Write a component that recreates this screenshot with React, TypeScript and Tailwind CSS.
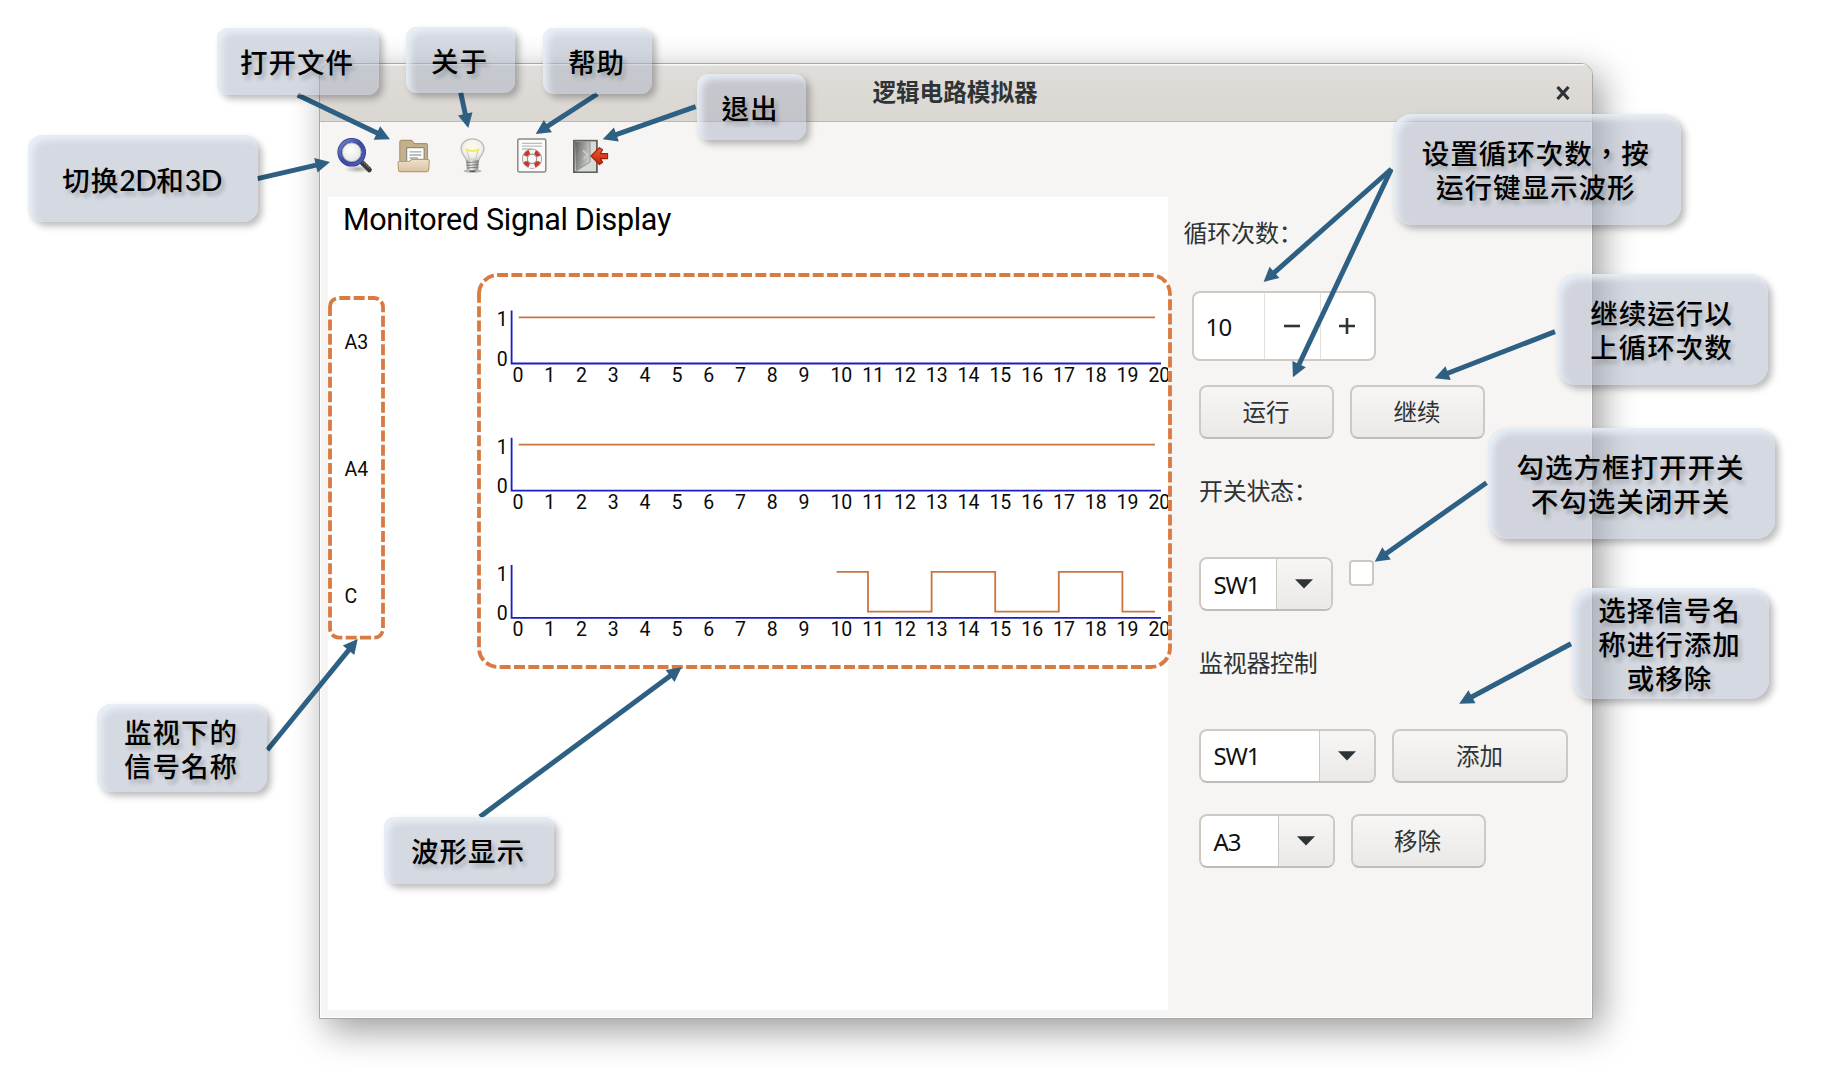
import React from "react";

const UI_FONT = "font-['Noto_Sans','Noto_Sans_CJK_SC',sans-serif]";

/* ---------- toolbar icons ---------- */

function SearchIcon() {
  return (
    <svg width="40" height="40" viewBox="0 0 40 40">
      <defs>
        <linearGradient id="ring" x1="0" y1="0" x2="1" y2="1">
          <stop offset="0" stopColor="#6f88d4" />
          <stop offset="0.5" stopColor="#3a4ba3" />
          <stop offset="1" stopColor="#4a60bd" />
        </linearGradient>
        <radialGradient id="glass" cx="0.45" cy="0.4" r="0.6">
          <stop offset="0" stopColor="#ffffff" />
          <stop offset="1" stopColor="#e2e2e0" />
        </radialGradient>
        <radialGradient id="searchShade">
          <stop offset="0" stopColor="#000" stopOpacity="0.3" />
          <stop offset="1" stopColor="#000" stopOpacity="0" />
        </radialGradient>
      </defs>
      <ellipse cx="23" cy="34" rx="14" ry="4" fill="url(#searchShade)" />
      <path d="M26 26.5 L34.3 34.8" stroke="#3a3836" strokeWidth="5" strokeLinecap="round" />
      <path d="M27.5 26.6 L35 33.6" stroke="#8a8680" strokeWidth="1.3" strokeDasharray="1.2 1.2" />
      <circle cx="16.7" cy="17.3" r="11.6" fill="url(#glass)" />
      <circle cx="16.7" cy="17.3" r="12" fill="none" stroke="#2c3680" strokeWidth="4.6" />
      <circle cx="16.7" cy="17.3" r="12" fill="none" stroke="url(#ring)" strokeWidth="3.2" />
      <circle cx="16.7" cy="17.3" r="9.4" fill="none" stroke="#9c9ea8" strokeWidth="0.9" />
    </svg>
  );
}

function FolderIcon() {
  return (
    <svg width="40" height="40" viewBox="0 0 40 40">
      <defs>
        <linearGradient id="folderFront" x1="0" y1="0" x2="0" y2="1">
          <stop offset="0" stopColor="#efe0ca" />
          <stop offset="1" stopColor="#d9c3a2" />
        </linearGradient>
      </defs>
      <path d="M5.8 30 V7 Q5.8 5.4 7.4 5.4 H17.5 L20.5 8.6 H32 Q33.5 8.6 33.5 10 V30 Z" fill="#c4b18c" stroke="#a8946c" strokeWidth="1.1" />
      <rect x="12.6" y="12.6" width="17.6" height="18" rx="0.8" fill="#fff" stroke="#8b8b86" strokeWidth="1.3" />
      <path d="M15.5 16.8 H27.5 M15.5 20 H27.5 M15.5 23 H24" stroke="#a7a9a6" strokeWidth="1.3" />
      <path d="M5.2 26.5 H15 L18 24.4 H33.2 Q35.4 24.4 35.3 26.2 L34.6 35 Q34.5 36.6 33 36.6 H6 Q4.6 36.6 4.5 35 L4 28 Q4 26.5 5.2 26.5 Z" fill="url(#folderFront)" stroke="#b79d75" strokeWidth="1.1" />
    </svg>
  );
}

function BulbIcon() {
  return (
    <svg width="40" height="40" viewBox="0 0 40 40">
      <defs>
        <radialGradient id="bulbGlass" cx="0.5" cy="0.42" r="0.6">
          <stop offset="0" stopColor="#fffbe0" />
          <stop offset="0.6" stopColor="#f4f4ee" />
          <stop offset="1" stopColor="#d2d5d0" />
        </radialGradient>
        <linearGradient id="bulbBase" x1="0" y1="0" x2="1" y2="0">
          <stop offset="0" stopColor="#8c8e8a" />
          <stop offset="0.4" stopColor="#f2f2f0" />
          <stop offset="1" stopColor="#7c7e7a" />
        </linearGradient>
      </defs>
      <ellipse cx="19.5" cy="36" rx="9" ry="1.8" fill="#000" opacity="0.25" />
      <path d="M13.2 25.5 C13 21.5 8 19.5 8 13.8 C8 8 13 3.9 19.5 3.9 C26 3.9 31 8 31 13.8 C31 19.5 26 21.5 25.8 25.5 Z" fill="url(#bulbGlass)" stroke="#b9bcb7" strokeWidth="1.3" />
      <path d="M16.5 24.5 L13.5 13.5 M22.5 24.5 L25.5 13.5" stroke="#c9c9bd" strokeWidth="1" fill="none" />
      <path d="M13.2 13.6 Q13.8 16.4 16.5 15.2 Q19.5 17 22.5 15.2 Q25.2 16.4 25.8 13.6" stroke="#f3e766" strokeWidth="1.8" fill="none" />
      <path d="M13.2 25.3 H25.8 L25.2 34 Q24 36.3 19.5 36.3 Q15 36.3 13.8 34 Z" fill="url(#bulbBase)" />
      <path d="M13.3 27.6 L25.7 26.8 M13.5 30.4 L25.5 29.6 M13.7 33 L25.3 32.2" stroke="#7d7f7b" strokeWidth="1" />
      <path d="M16 35.4 H23 L21.5 37 H17.5 Z" fill="#4a4b49" />
    </svg>
  );
}

function HelpIcon() {
  return (
    <svg width="40" height="40" viewBox="0 0 40 40">
      <rect x="5.8" y="4" width="28" height="33" rx="1.4" fill="#fafafa" stroke="#888a85" strokeWidth="1.5" />
      <path d="M10 8.4 H30 M10 11.2 H30 M10 14 H20" stroke="#bcbfb9" strokeWidth="1.3" />
      <circle cx="20" cy="23.8" r="7.2" fill="none" stroke="#8f8f8b" strokeWidth="5.6" />
      <circle cx="20" cy="23.8" r="7.2" fill="none" stroke="#f3f3f1" strokeWidth="4.2" />
      <circle
        cx="20"
        cy="23.8"
        r="7.2"
        fill="none"
        stroke="#d2332f"
        strokeWidth="4.2"
        strokeDasharray="5.65 5.66"
        transform="rotate(22.5 20 23.8)"
      />
      <circle cx="20" cy="23.8" r="4.6" fill="#fafafa" stroke="#8c8c88" strokeWidth="0.9" />
    </svg>
  );
}

function QuitIcon() {
  return (
    <svg width="40" height="40" viewBox="0 0 40 40">
      <defs>
        <linearGradient id="door" x1="0" y1="0" x2="1" y2="0.4">
          <stop offset="0" stopColor="#5f615e" />
          <stop offset="1" stopColor="#c9cbc8" />
        </linearGradient>
        <linearGradient id="arrowRed" x1="0" y1="0" x2="0" y2="1">
          <stop offset="0" stopColor="#ee5a35" />
          <stop offset="1" stopColor="#c02508" />
        </linearGradient>
      </defs>
      <rect x="2.9" y="5.7" width="23" height="31.4" fill="#eeeeec" stroke="#5f615d" strokeWidth="1.8" />
      <path d="M4 6.8 H19 V27 L4.6 36.2 Z" fill="url(#door)" />
      <path d="M19 6.8 V27 L6 36.2 H25 V6.8 Z" fill="#d8dad6" />
      <path d="M19 7 V27 L5.5 36" stroke="#8a8c88" strokeWidth="0.9" fill="none" />
      <path d="M12 15.5 L16.5 19.5 L12.5 24" stroke="#c8cac6" strokeWidth="1.8" fill="none" />
      <path d="M20 21 L28.4 12.6 L31.6 14.6 L29.4 18.6 H36.6 V23.6 H29.4 L31.6 27.4 L28.4 29.6 Z" fill="url(#arrowRed)" stroke="#a51d05" strokeWidth="1.1" strokeLinejoin="round" />
    </svg>
  );
}

/* ---------- signal plots ---------- */

const TICKS = Array.from({ length: 21 }, (_, i) => i);

const SIGNALS = [
  { name: "A3", top: 0, trace: "M518.7 317.4 H1155" },
  { name: "A4", top: 127.2, trace: "M518.7 317.4 H1155" },
  {
    name: "C",
    top: 254.4,
    trace: "M836.7 317.4 H868 V357.2 H931.6 V317.4 H995.2 V357.2 H1058.8 V317.4 H1122.4 V357.2 H1155",
  },
];

function SignalChart() {
  return (
    <svg
      width="840"
      height="750"
      viewBox="328 260 840 750"
      className="block font-['Roboto','Liberation_Sans',sans-serif] text-[19.5px]"
    >
      {SIGNALS.map((s) => (
        <g key={s.name} transform={`translate(0 ${s.top})`} fill="#0a0a0a">
          <text x="344.5" y="348.6">{s.name}</text>
          <text x="496.8" y="326.4">1</text>
          <text x="496.8" y="365.8">0</text>
          <path d="M511.6 310.5 V363.5 H1161" fill="none" stroke="#1c1cc8" strokeWidth="1.8" />
          <path d={s.trace} fill="none" stroke="#c9743f" strokeWidth="1.8" />
          {TICKS.map((t) => (
            <text key={t} x={512.4 + t * 31.8} y="381.9">{t}</text>
          ))}
        </g>
      ))}
    </svg>
  );
}

/* ---------- form controls ---------- */

function Button({ label, width }: { label: string; width: string }) {
  return (
    <button
      className={`${width} flex h-[54px] items-center justify-center rounded-[8px] border-2 border-[#cfc9c4] border-b-[#c3bcb6] bg-linear-to-b from-[#f7f6f5] to-[#ebe9e7] pr-px pt-[2px] text-[23.5px] leading-none`}
    >
      {label}
    </button>
  );
}

function Combo({ value, field, arrow }: { value: string; field: string; arrow: string }) {
  return (
    <div className="flex h-[54px] overflow-hidden rounded-[8px] border-2 border-[#cfc9c4] border-b-[#c3bcb6] bg-white">
      <div className={`${field} flex items-center pl-[12.5px] pt-px text-[24px] leading-none tracking-[-1.1px] text-[#111]`}>{value}</div>
      <div className={`${arrow} flex items-center justify-center border-l-[1.5px] border-[#cdc7c2] bg-linear-to-b from-[#f7f6f5] to-[#ebe9e7]`}>
        <svg width="18" height="10" viewBox="0 0 18 10">
          <path d="M0 0.3 H18 L9 9.6 Z" fill="#2e3436" />
        </svg>
      </div>
    </div>
  );
}

function ControlPanel() {
  return (
    <div className="flex flex-1 flex-col items-start pl-[31px] text-[#2e3436]">
      <div className="-ml-[15.5px] mt-[93px] h-[36px] text-[24px] leading-[36px] tracking-[-0.2px]">循环次数：</div>
      <div className="-ml-[7.5px] mt-[40px] flex h-[70px] w-[184px] rounded-[8px] border-2 border-[#cfc9c4] bg-white">
        <div className="flex w-[70px] items-center pl-[12px] pt-px text-[24px] leading-none tracking-[-0.7px] text-[#111]">10</div>
        <div className="flex w-[56px] items-center justify-center border-l border-[#e3e0dd]">
          <svg width="16" height="16" viewBox="0 0 16 16"><path d="M0 8 H16" stroke="#2e3436" strokeWidth="2.6" /></svg>
        </div>
        <div className="flex flex-1 items-center justify-center border-l border-[#e3e0dd]">
          <svg width="16" height="16" viewBox="0 0 16 16"><path d="M0 8 H16 M8 0 V16" stroke="#2e3436" strokeWidth="2.6" /></svg>
        </div>
      </div>
      <div className="mt-[24px] flex gap-[16px]">
        <Button label="运行" width="w-[135px]" />
        <Button label="继续" width="w-[135px]" />
      </div>
      <div className="mt-[34px] h-[36px] text-[24px] leading-[36px] tracking-[-0.3px]">开关状态：</div>
      <div className="mt-[48px] flex gap-[16px]">
        <Combo value="SW1" field="w-[75px]" arrow="w-[55px]" />
        <div className="mt-[3px] h-[26px] w-[25px] rounded-[4px] border-2 border-[#cdc7c2] bg-white" />
      </div>
      <div className="mt-[34px] h-[36px] text-[24px] leading-[36px] tracking-[-0.3px]">监视器控制</div>
      <div className="mt-[47.5px] flex gap-[16px]">
        <Combo value="SW1" field="w-[118px]" arrow="w-[55px]" />
        <Button label="添加" width="w-[176px]" />
      </div>
      <div className="mt-[31.5px] flex gap-[16px]">
        <Combo value="A3" field="w-[76.5px]" arrow="w-[55px]" />
        <Button label="移除" width="w-[135px]" />
      </div>
    </div>
  );
}

/* ---------- annotations ---------- */

const ARROWS = [
  [257.5, 178.6, 330, 162],
  [297.7, 95, 390, 139.3],
  [460.7, 92.7, 468.3, 128],
  [597.3, 94, 535.7, 134],
  [695.7, 106.7, 602.7, 139.3],
  [1391.4, 169, 1263.6, 282],
  [1391.4, 169, 1292.9, 377.3],
  [1555, 331.7, 1434.6, 378.3],
  [1486.5, 482.7, 1374.7, 561.7],
  [1571, 643.7, 1459.2, 703.7],
  [267.3, 750, 357.7, 639],
  [480, 816.7, 681.7, 667.3],
];

function Arrow({ from }: { from: number[] }) {
  const [x1, y1, x2, y2] = from;
  const len = Math.hypot(x2 - x1, y2 - y1);
  const deg = (Math.atan2(y2 - y1, x2 - x1) * 180) / Math.PI;
  return (
    <g transform={`translate(${x1} ${y1}) rotate(${deg})`} fill="#2e6083">
      <path d={`M0 -2.5 H${len - 12} V2.5 H0 Z`} />
      <path d={`M${len} 0 L${len - 14.5} -7.4 V7.4 Z`} />
    </g>
  );
}

const CALLOUTS = [
  { box: [28, 135, 230, 87], lines: ["切换2D和3D"] },
  { box: [217, 28, 162, 67], lines: ["打开文件"] },
  { box: [406, 27, 109, 66], lines: ["关于"] },
  { box: [543, 28, 109, 66], lines: ["帮助"] },
  { box: [696.5, 74, 109, 66], lines: ["退出"] },
  { box: [1392.5, 114, 288.5, 111], lines: ["设置循环次数，按", "运行键显示波形"] },
  { box: [1557, 274, 211, 111], lines: ["继续运行以", "上循环次数"] },
  { box: [1488, 428, 287, 111], lines: ["勾选方框打开开关", "不勾选关闭开关"] },
  { box: [1572, 588, 197, 111], lines: ["选择信号名", "称进行添加", "或移除"] },
  { box: [97, 704, 170, 88], lines: ["监视下的", "信号名称"] },
  { box: [384, 817, 170, 67], lines: ["波形显示"] },
];

function Callout({ box, lines }: { box: number[]; lines: string[] }) {
  const [left, top, width, height] = box;
  return (
    <div
      className="absolute flex flex-col items-center justify-center whitespace-nowrap bg-[rgba(171,179,195,0.5)] pr-[2px] pt-[3px] font-['Lato','Noto_Sans_CJK_TC',sans-serif] text-[27.5px] font-medium leading-[34px] tracking-[1px] text-black shadow-[inset_5px_5px_7px_rgba(236,243,252,0.85),4px_4px_7px_rgba(0,0,0,0.27)] [text-shadow:3px_4px_4px_rgba(0,0,0,0.22)]"
      style={{ left, top, width, height, borderRadius: height / 6 }}
    >
      {lines.map((line) => (
        <span key={line}>
          {line.split(/(\dD)/).map((part, i) =>
            /\dD/.test(part) ? (
              <span key={i} className="text-[28.5px] tracking-[-0.6px]">{part}</span>
            ) : (
              part
            ),
          )}
        </span>
      ))}
    </div>
  );
}

export default function App() {
  return (
    <div className={`relative h-[1082px] w-[1834px] overflow-hidden bg-white pl-[319px] pt-[63px] ${UI_FONT}`}>
      <div className="flex h-[956px] w-[1274px] flex-col overflow-hidden rounded-t-[12px] border border-[#a9a8a6] bg-[#f6f5f4] shadow-[8px_11px_36px_rgba(0,0,0,0.4)]">
        <header className="grid h-[58px] shrink-0 grid-cols-[1fr_auto_1fr] items-center border-b-[1.5px] border-[#bfb8b1] bg-linear-to-b from-[#e0deda] to-[#dad6d2] shadow-[inset_0_1.5px_0_#f8f8f7]">
          <span />
          <h1 className="pr-[2px] pt-px text-[23.6px] font-bold leading-none text-[#2e3436]">逻辑电路模拟器</h1>
          <div className="mr-[22.5px] justify-self-end">
            <svg width="14" height="14" viewBox="0 0 14 14">
              <path d="M1.5 1 L12.5 13 M12.5 1 L1.5 13" stroke="#2e3436" strokeWidth="3.2" />
            </svg>
          </div>
        </header>
        <div className="flex flex-1 border-b-[1.5px] border-l-[1.5px] border-r-[1.5px] border-white">
          <main className="flex w-[847px] shrink-0 flex-col pl-[7px]">
            <div className="flex h-[75px] items-center gap-[19px] pb-[10px] pl-[7px]">
              <SearchIcon />
              <FolderIcon />
              <BulbIcon />
              <HelpIcon />
              <QuitIcon />
            </div>
            <section className="h-[813px] bg-white">
              <h2 className="h-[63px] whitespace-nowrap pl-[15px] pt-[5px] font-['Roboto','Liberation_Sans',sans-serif] text-[30.5px] leading-[36px] tracking-[-0.33px] text-black">
                Monitored Signal Display
              </h2>
              <SignalChart />
            </section>
          </main>
          <ControlPanel />
        </div>
      </div>

      <svg className="pointer-events-none absolute inset-0" width="1834" height="1082" viewBox="0 0 1834 1082">
        <g fill="none" stroke="#d97a41" strokeWidth="3.8" strokeDasharray="11 3.35">
          <path d="M330 307 a9 9 0 0 1 9 -9 H374 a9 9 0 0 1 9 9 V628.7 a9 9 0 0 1 -9 9 H339 a9 9 0 0 1 -9 -9 Z" />
          <path d="M479 294 a19 19 0 0 1 19 -19 H1151 a19 19 0 0 1 19 19 V648 a19 19 0 0 1 -19 19 H498 a19 19 0 0 1 -19 -19 Z" />
        </g>
        {ARROWS.map((a, i) => (
          <Arrow key={i} from={a} />
        ))}
      </svg>

      {CALLOUTS.map((c) => (
        <Callout key={c.lines[0]} {...c} />
      ))}
    </div>
  );
}
